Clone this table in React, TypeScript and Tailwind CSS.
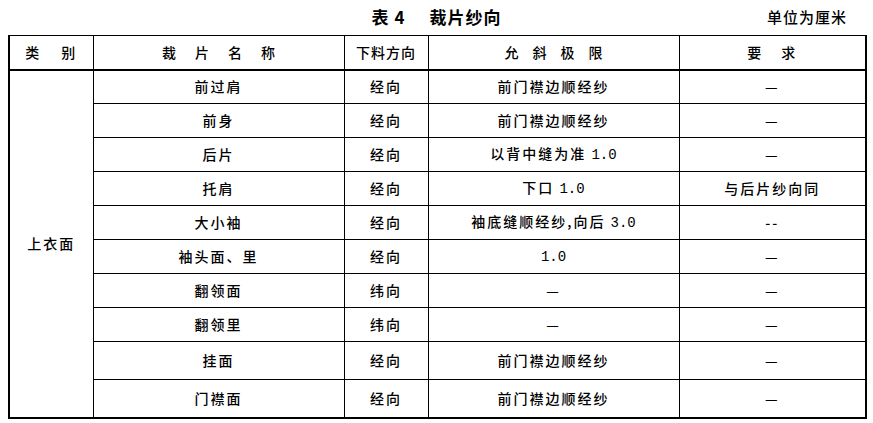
import React from 'react';

type Row = { name: string; dir: string; limit: React.ReactNode; req: string; h: string };

const num = (s: string) => <span className="font-['Liberation_Mono',monospace] tracking-normal">{s}</span>;

const rows: Row[] = [
  { name: '前过肩', dir: '经向', limit: '前门襟边顺经纱', req: '—', h: 'h-[34px]' },
  { name: '前身', dir: '经向', limit: '前门襟边顺经纱', req: '—', h: 'h-[34px]' },
  { name: '后片', dir: '经向', limit: <>以背中缝为准 {num('1.0')}</>, req: '—', h: 'h-[34px]' },
  { name: '托肩', dir: '经向', limit: <>下口 {num('1.0')}</>, req: '与后片纱向同', h: 'h-[34px]' },
  { name: '大小袖', dir: '经向', limit: <>袖底缝顺经纱,向后 {num('3.0')}</>, req: '--', h: 'h-[34px]' },
  { name: '袖头面、里', dir: '经向', limit: num('1.0'), req: '—', h: 'h-[34px]' },
  { name: '翻领面', dir: '纬向', limit: '—', req: '—', h: 'h-[34px]' },
  { name: '翻领里', dir: '纬向', limit: '—', req: '—', h: 'h-[34px]' },
  { name: '挂面', dir: '经向', limit: '前门襟边顺经纱', req: '—', h: 'h-[38px]' },
  { name: '门襟面', dir: '经向', limit: '前门襟边顺经纱', req: '—', h: 'h-[38px]' },
];

const cell = 'border border-black text-center align-middle p-0';

function App() {
  return (
    <div className="w-[873px] h-[423px] bg-white text-black overflow-hidden font-['Noto_Sans_CJK_SC',sans-serif] font-medium text-[14px] tracking-[2px]">
      <div className="relative h-[35px] flex items-center justify-center pb-[2px]">
        <span className="font-bold text-[17px] tracking-[1px]">
          表 4<span className="inline-block w-[24px]" />裁片纱向
        </span>
        <span className="absolute right-[26px] top-[6px] text-[15px] tracking-[1px]">单位为厘米</span>
      </div>
      <table className="ml-[8px] w-[857px] border-collapse table-fixed border-x-2 border-b-2 border-black">
        <colgroup>
          <col className="w-[84px]" />
          <col className="w-[251px]" />
          <col className="w-[84px]" />
          <col className="w-[251px]" />
          <col className="w-[187px]" />
        </colgroup>
        <thead>
          <tr className="h-[34px] border-b-2 border-black">
            <th className={`${cell} font-medium`}>类<span className="inline-block w-[20px]" />别</th>
            <th className={`${cell} font-medium`}>
              <span className="tracking-[19px] mr-[-19px]">裁片名称</span>
            </th>
            <th className={`${cell} font-medium tracking-[1px]`}>下料方向</th>
            <th className={`${cell} font-medium`}>
              <span className="tracking-[14px] mr-[-14px]">允斜极限</span>
            </th>
            <th className={`${cell} font-medium`}>要<span className="inline-block w-[18px]" />求</th>
          </tr>
        </thead>
        <tbody>
          {rows.map((r, i) => (
            <tr key={i} className={r.h}>
              {i === 0 && (
                <td rowSpan={rows.length} className={cell}>
                  上衣面
                </td>
              )}
              <td className={cell}>{r.name}</td>
              <td className={cell}>{r.dir}</td>
              <td className={cell}>{r.limit}</td>
              <td className={cell}>{r.req}</td>
            </tr>
          ))}
        </tbody>
      </table>
    </div>
  );
}

export default App;
